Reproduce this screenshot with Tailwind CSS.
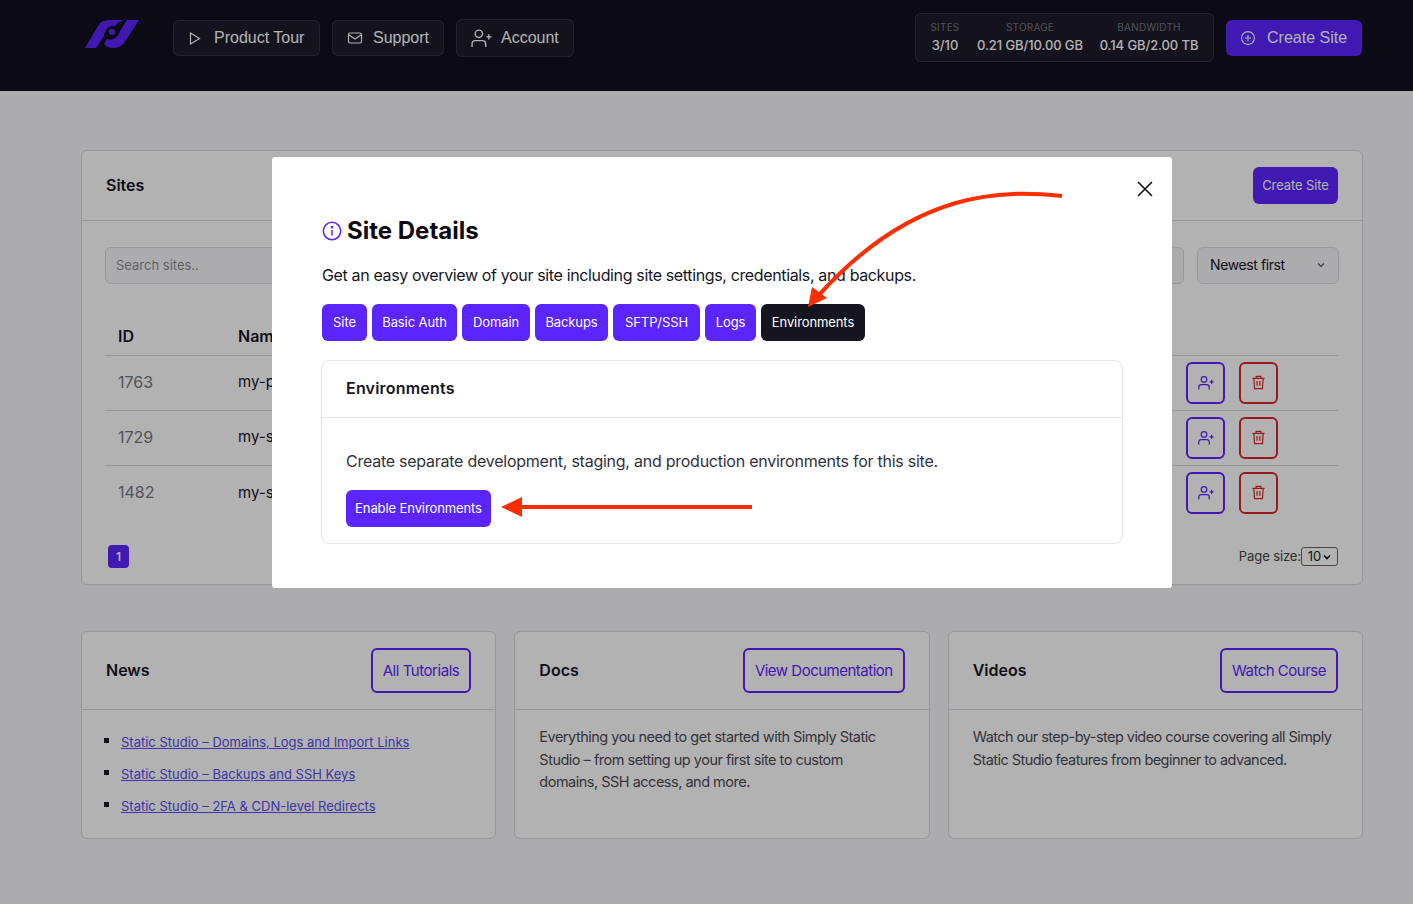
<!DOCTYPE html>
<html lang="en">
<head>
  <meta charset="UTF-8" />
  <title>Static Studio</title>
  <script src="https://cdn.jsdelivr.net/npm/@tailwindcss/browser@4"></script>
</head>
<body class="relative h-[904px] overflow-hidden bg-[#f6f6fb] font-['Inter',sans-serif] text-[#16151f]">

  <!-- top bar -->
  <header class="flex h-[91px] items-start bg-[#100f1f] pl-[85px] pr-[51px] font-['Liberation_Sans',sans-serif]">
    <svg class="mt-[20px] h-[28px] w-[54px] shrink-0" viewBox="0 0 54 28" fill="#5b25ff">
      <path d="M0 28 L13 6 Q16 0 24 0 H38 Q33 2 30 6 Q24 5 21 10 Q19 13 19 16 L11 28 Z" />
      <path d="M54 0 H42 L35 11 Q34 16 30 18 Q26 21 22 19 L19 24 Q22 28 28 28 Q35 28 39 23 Z" />
      <circle cx="27" cy="12" r="3" />
    </svg>
    <nav class="ml-[34px] mt-[19px] flex items-center gap-3">
      <a class="flex h-[36px] w-[147px] items-center gap-[13px] rounded-md border border-white/10 bg-white/5 pl-[15px] text-base text-white">
        <svg class="h-[13px] w-[12px]" viewBox="0 0 12 13" fill="none" stroke="currentColor" stroke-width="1.2"><path d="M1.5 1 L10.5 6.5 L1.5 12 Z" /></svg>
        Product Tour
      </a>
      <a class="flex h-[36px] w-[112px] items-center gap-[10px] rounded-md border border-white/10 bg-white/5 pl-[14px] text-base text-white">
        <svg class="h-[16px] w-[16px]" viewBox="0 0 16 16" fill="none" stroke="currentColor" stroke-width="1.2"><rect x="1.5" y="3" width="13" height="10" rx="1.5" /><path d="M2 5 L8 9 L14 5" /></svg>
        Support
      </a>
      <a class="flex h-[38px] w-[118px] items-center gap-[9px] rounded-md border border-white/10 bg-white/5 pl-[14px] text-base text-white">
        <svg class="h-[21px] w-[21px]" viewBox="0 0 20 20" fill="none" stroke="currentColor" stroke-width="1.3"><circle cx="7.5" cy="5.5" r="3.5" /><path d="M1 18 V15 Q1 12 4 12 H11 Q14 12 14 15 V18" /><path d="M14.5 8.5 H19.5 M17 6 V11" /></svg>
        Account
      </a>
    </nav>
    <div class="ml-auto mt-[13px] flex h-[49px] w-[299px] items-start rounded-md border border-white/10 bg-white/5 pl-[14px] pt-[7px] font-['Inter',sans-serif]">
      <div class="w-[30px] text-center">
        <div class="text-[10px] leading-[13px] tracking-[0.2px] text-white/40">SITES</div>
        <div class="mt-[3px] text-[13px] font-medium leading-[16px] text-white">3/10</div>
      </div>
      <div class="ml-[16px] w-[108px] text-center">
        <div class="text-[10px] leading-[13px] tracking-[0.2px] text-white/40">STORAGE</div>
        <div class="mt-[3px] whitespace-nowrap text-[13px] font-medium leading-[16px] tracking-[-0.1px] text-white">0.21 GB/10.00 GB</div>
      </div>
      <div class="ml-[15px] w-[100px] text-center">
        <div class="text-[10px] leading-[13px] tracking-[0.2px] text-white/40">BANDWIDTH</div>
        <div class="mt-[3px] whitespace-nowrap text-[13px] font-medium leading-[16px] tracking-[-0.1px] text-white">0.14 GB/2.00 TB</div>
      </div>
    </div>
    <a class="ml-3 mt-[20px] flex h-[36px] w-[136px] items-center gap-[12px] rounded-md bg-[#5b25ff] pl-[15px] text-base text-white">
      <svg class="h-[14px] w-[14px]" viewBox="0 0 14 14" fill="none" stroke="currentColor" stroke-width="1.1"><circle cx="7" cy="7" r="6.4" /><path d="M7 4 V10 M4 7 H10" /></svg>
      Create Site
    </a>
  </header>

  <main class="pl-[81px] pr-[50px] pt-[59px]">
    <!-- sites card -->
    <section class="h-[435px] rounded-md border border-[#d9d9e0] bg-white">
      <div class="flex h-[70px] items-center justify-between border-b border-[#d9d9e0] pl-[24px] pr-[24px]">
        <h2 class="mb-[2px] text-base font-semibold">Sites</h2>
        <button class="h-[37px] w-[85px] rounded-md bg-[#5b25ff] text-[13px] tracking-[-0.1px] text-white">Create Site</button>
      </div>
      <div class="pl-[23px] pr-[23px] pt-[26px]">
        <div class="flex gap-[13px]">
          <input class="h-[37px] w-[1079px] rounded-md border border-[#d9d9e0] bg-[#f6f6fb] px-[10px] pb-[2px] text-[13px]" placeholder="Search sites.." />
          <div class="flex h-[37px] w-[142px] items-center justify-between rounded-md border border-[#d9d9e0] bg-[#f6f6fb] pb-[2px] pl-[12px] pr-[12px] text-sm tracking-[-0.4px]">
            Newest first
            <svg class="h-[10px] w-[10px]" viewBox="0 0 10 10" fill="none" stroke="#555" stroke-width="1.2"><path d="M2 3.5 L5 6.5 L8 3.5" /></svg>
          </div>
        </div>
        <table class="mt-[35px] w-[1233px] border-collapse text-left">
          <thead>
            <tr class="h-[36px] border-b border-[#d9d9e0]"><th class="w-[133px] pb-[2px] pl-[13px] text-base font-semibold">ID</th><th class="pb-[2px] text-base font-semibold">Name</th><th class="w-[152px]"></th></tr>
          </thead>
          <tbody>
            <tr class="h-[55px] border-b border-[#d9d9e0]">
              <td class="pb-[2px] pl-[13px] text-base text-[#77767f]">1763</td><td class="text-[15px]">my-project</td>
              <td>
                <div class="flex gap-[14px]">
                  <button class="flex h-[42px] w-[39px] items-center justify-center rounded-md border-2 border-[#5b25ff] text-[#5b25ff]"><svg class="h-[16px] w-[16px]" viewBox="0 0 20 20" fill="none" stroke="currentColor" stroke-width="1.5"><circle cx="7.5" cy="5.5" r="3.5" /><path d="M1 18 V15 Q1 12 4 12 H11 Q14 12 14 15 V18" /><path d="M14.5 8.5 H19.5 M17 6 V11" /></svg></button>
                  <button class="flex h-[42px] w-[39px] items-center justify-center rounded-md border-2 border-[#dc2626] text-[#dc2626]"><svg class="h-[15px] w-[15px]" viewBox="0 0 16 16" fill="none" stroke="currentColor" stroke-width="1.3"><path d="M1.5 3.5 H14.5 M5.5 3.5 V1.5 H10.5 V3.5 M3 3.5 L3.8 14.5 H12.2 L13 3.5 M6.5 6.5 V11.5 M9.5 6.5 V11.5" /></svg></button>
                </div>
              </td>
            </tr>
            <tr class="h-[55px] border-b border-[#d9d9e0]">
              <td class="pb-[2px] pl-[13px] text-base text-[#77767f]">1729</td><td class="text-[15px]">my-site</td>
              <td>
                <div class="flex gap-[14px]">
                  <button class="flex h-[42px] w-[39px] items-center justify-center rounded-md border-2 border-[#5b25ff] text-[#5b25ff]"><svg class="h-[16px] w-[16px]" viewBox="0 0 20 20" fill="none" stroke="currentColor" stroke-width="1.5"><circle cx="7.5" cy="5.5" r="3.5" /><path d="M1 18 V15 Q1 12 4 12 H11 Q14 12 14 15 V18" /><path d="M14.5 8.5 H19.5 M17 6 V11" /></svg></button>
                  <button class="flex h-[42px] w-[39px] items-center justify-center rounded-md border-2 border-[#dc2626] text-[#dc2626]"><svg class="h-[15px] w-[15px]" viewBox="0 0 16 16" fill="none" stroke="currentColor" stroke-width="1.3"><path d="M1.5 3.5 H14.5 M5.5 3.5 V1.5 H10.5 V3.5 M3 3.5 L3.8 14.5 H12.2 L13 3.5 M6.5 6.5 V11.5 M9.5 6.5 V11.5" /></svg></button>
                </div>
              </td>
            </tr>
            <tr class="h-[55px]">
              <td class="pb-[2px] pl-[13px] text-base text-[#77767f]">1482</td><td class="text-[15px]">my-static-site</td>
              <td>
                <div class="flex gap-[14px]">
                  <button class="flex h-[42px] w-[39px] items-center justify-center rounded-md border-2 border-[#5b25ff] text-[#5b25ff]"><svg class="h-[16px] w-[16px]" viewBox="0 0 20 20" fill="none" stroke="currentColor" stroke-width="1.5"><circle cx="7.5" cy="5.5" r="3.5" /><path d="M1 18 V15 Q1 12 4 12 H11 Q14 12 14 15 V18" /><path d="M14.5 8.5 H19.5 M17 6 V11" /></svg></button>
                  <button class="flex h-[42px] w-[39px] items-center justify-center rounded-md border-2 border-[#dc2626] text-[#dc2626]"><svg class="h-[15px] w-[15px]" viewBox="0 0 16 16" fill="none" stroke="currentColor" stroke-width="1.3"><path d="M1.5 3.5 H14.5 M5.5 3.5 V1.5 H10.5 V3.5 M3 3.5 L3.8 14.5 H12.2 L13 3.5 M6.5 6.5 V11.5 M9.5 6.5 V11.5" /></svg></button>
                </div>
              </td>
            </tr>
          </tbody>
        </table>
        <div class="mr-[1px] mt-[25px] flex items-center justify-between pl-[3px]">
          <span class="flex h-[23px] w-[21px] items-center justify-center rounded bg-[#5b25ff] text-xs font-semibold text-white">1</span>
          <div class="flex items-center text-[13px] tracking-[-0.1px] text-[#444]">Page size:
            <span class="flex h-[19px] w-[37px] items-center justify-center gap-[2px] rounded-[3px] border border-[#666] text-[13px] text-[#222]">10
              <svg class="h-[8px] w-[8px]" viewBox="0 0 8 8" fill="none" stroke="#111" stroke-width="1.6"><path d="M1 2.5 L4 5.5 L7 2.5" /></svg>
            </span>
          </div>
        </div>
      </div>
    </section>

    <!-- bottom cards -->
    <div class="mt-[46px] grid grid-cols-3 gap-[18px]">
      <section class="h-[208px] rounded-md border border-[#d9d9e0] bg-white">
        <div class="flex h-[78px] items-center justify-between border-b border-[#d9d9e0] pl-[24px] pr-[24px]">
          <h2 class="mb-[2px] text-base font-semibold">News</h2>
          <a class="flex h-[45px] items-center rounded-md border-2 border-[#5b25ff] px-[10px] pt-[2px] text-[15px] tracking-[-0.45px] text-[#5b25ff]">All Tutorials</a>
        </div>
        <ul class="list-none pl-[39px] pt-[16px] text-[13px] leading-[32px] text-[#5b4cf0]">
          <li class="relative underline before:absolute before:-left-[17px] before:top-[12px] before:h-[5px] before:w-[5px] before:bg-[#16151f]">Static Studio – Domains, Logs and Import Links</li>
          <li class="relative underline before:absolute before:-left-[17px] before:top-[12px] before:h-[5px] before:w-[5px] before:bg-[#16151f]">Static Studio – Backups and SSH Keys</li>
          <li class="relative underline before:absolute before:-left-[17px] before:top-[12px] before:h-[5px] before:w-[5px] before:bg-[#16151f]">Static Studio – 2FA &amp; CDN-level Redirects</li>
        </ul>
      </section>
      <section class="h-[208px] rounded-md border border-[#d9d9e0] bg-white">
        <div class="flex h-[78px] items-center justify-between border-b border-[#d9d9e0] pl-[24px] pr-[24px]">
          <h2 class="mb-[2px] text-base font-semibold">Docs</h2>
          <a class="flex h-[45px] items-center rounded-md border-2 border-[#5b25ff] px-[10px] pt-[2px] text-[15px] tracking-[-0.5px] text-[#5b25ff]">View Documentation</a>
        </div>
        <p class="px-[24px] pt-[16px] text-[14.5px] leading-[22.5px] tracking-[-0.5px] text-[#4c4b55]">Everything you need to get started with Simply Static Studio – from setting up your first site to custom domains, SSH access, and more.</p>
      </section>
      <section class="h-[208px] rounded-md border border-[#d9d9e0] bg-white">
        <div class="flex h-[78px] items-center justify-between border-b border-[#d9d9e0] pl-[24px] pr-[24px]">
          <h2 class="mb-[2px] text-base font-semibold">Videos</h2>
          <a class="flex h-[45px] items-center rounded-md border-2 border-[#5b25ff] px-[10px] pt-[2px] text-[15px] tracking-[-0.5px] text-[#5b25ff]">Watch Course</a>
        </div>
        <p class="px-[24px] pt-[16px] text-[14.5px] leading-[22.5px] tracking-[-0.55px] text-[#4c4b55]">Watch our step-by-step video course covering all Simply Static Studio features from beginner to advanced.</p>
      </section>
    </div>
  </main>

  <!-- modal overlay -->
  <div class="absolute inset-0 bg-black/30"></div>
  <div class="absolute left-[272px] top-[157px] h-[431px] w-[900px] rounded-[3px] bg-white px-[50px] pt-[59px]">
    <svg class="absolute right-[18px] top-[23px] h-[18px] w-[18px]" viewBox="0 0 18 18" fill="none" stroke="#111" stroke-width="1.6"><path d="M2 2 L16 16 M16 2 L2 16" /></svg>
    <h1 class="flex items-center gap-[5px] text-2xl font-bold leading-[30px] text-[#0b0a12]">
      <svg class="h-[20px] w-[20px]" viewBox="0 0 20 20" fill="none" stroke="#5b25ff" stroke-width="1.5"><circle cx="10" cy="10" r="8.7" /><path d="M10 9 V14.5" /><circle cx="10" cy="6.2" r="0.6" fill="#5b25ff" /></svg>
      Site Details
    </h1>
    <p class="mt-[18px] text-base leading-[22px] tracking-[-0.36px] text-[#16151f]">Get an easy overview of your site including site settings, credentials, and backups.</p>
    <div class="mt-[18px] flex gap-[5px] text-[13px] tracking-[-0.1px]">
      <button class="h-[37px] w-[45px] rounded-md bg-[#5b25ff] text-white">Site</button>
      <button class="h-[37px] w-[85px] rounded-md bg-[#5b25ff] text-white">Basic Auth</button>
      <button class="h-[37px] w-[68px] rounded-md bg-[#5b25ff] text-white">Domain</button>
      <button class="h-[37px] w-[73px] rounded-md bg-[#5b25ff] text-white">Backups</button>
      <button class="h-[37px] w-[87px] rounded-md bg-[#5b25ff] text-white">SFTP/SSH</button>
      <button class="h-[37px] w-[51px] rounded-md bg-[#5b25ff] text-white">Logs</button>
      <button class="h-[37px] w-[104px] rounded-md bg-[#16151f] text-white">Environments</button>
    </div>
    <div class="-ml-[1px] mt-[19px] h-[184px] w-[802px] rounded-lg border border-[#e3e3e8]">
      <div class="flex h-[57px] items-center border-b border-[#e3e3e8] px-[24px] pb-[2px] text-base font-semibold tracking-[0.2px]">Environments</div>
      <div class="px-[24px] pt-[32px]">
        <p class="text-base leading-[22px] tracking-[-0.25px] text-[#33323c]">Create separate development, staging, and production environments for this site.</p>
        <button class="mt-[18px] h-[37px] w-[145px] rounded-md bg-[#5b25ff] text-[13px] tracking-[-0.1px] text-white">Enable Environments</button>
      </div>
    </div>
  </div>

  <!-- annotation arrows -->
  <svg class="pointer-events-none absolute inset-0" width="1413" height="904" fill="none">
    <path d="M1062 196 C1005 190 915 188 818 296" stroke="#ff2d00" stroke-width="4" />
    <path d="M808 307 L812 287 L827 298 Z" fill="#ff2d00" />
    <path d="M518 507 H752" stroke="#ff2d00" stroke-width="4" />
    <path d="M501 507 L522 497 V517 Z" fill="#ff2d00" />
  </svg>
</body>
</html>
